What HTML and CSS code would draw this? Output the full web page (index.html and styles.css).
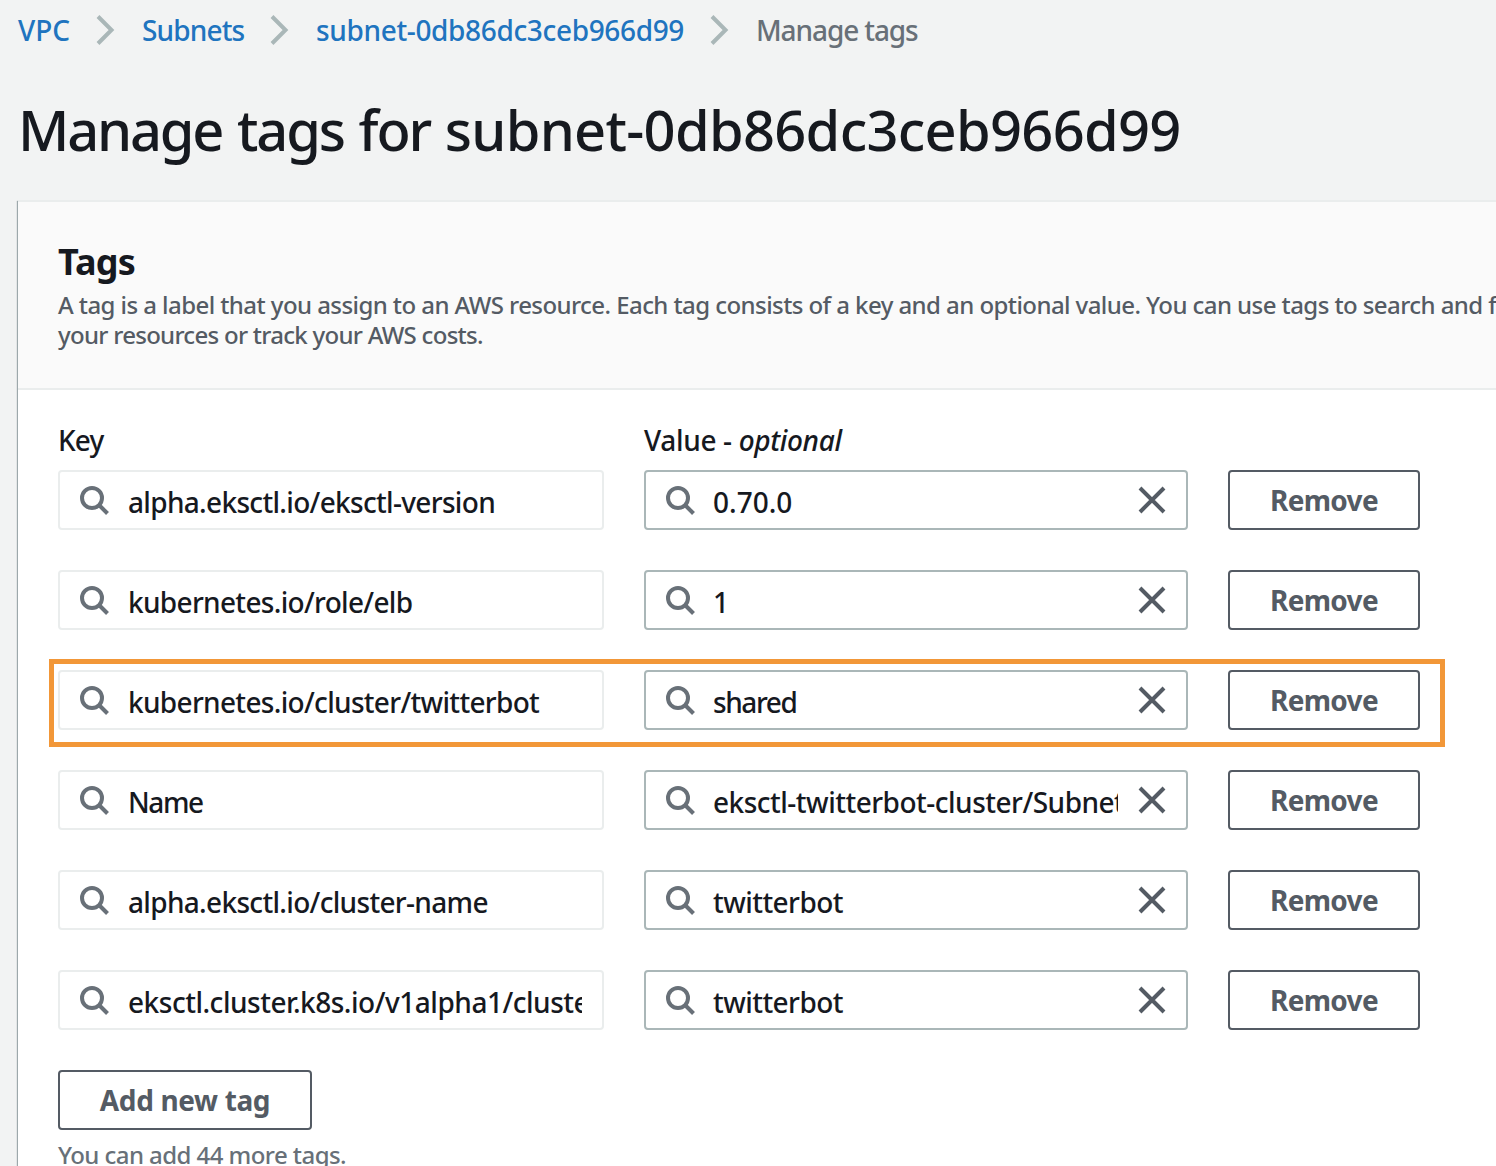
FILE: index.html
```html
<!DOCTYPE html>
<html lang="en">
<head>
<meta charset="utf-8">
<title>Manage tags</title>
<link rel="stylesheet" href="styles.css">
</head>
<body>
<svg class="sprite" aria-hidden="true">
  <symbol id="search" viewBox="0 0 32 32"><circle cx="14" cy="14" r="10" /><path d="M21 21l8.5 8.5" /></symbol>
  <symbol id="close" viewBox="0 0 32 32"><path d="M4 4l24 24M28 4L4 28" /></symbol>
  <symbol id="chevron" viewBox="0 0 20 32"><path d="M2 2.5L15.5 16 2 29.5" /></symbol>
</svg>
<nav class="breadcrumb">
  <a class="crumb vpc">VPC</a>
  <svg class="chevron"><use href="#chevron"/></svg>
  <a class="crumb subnets">Subnets</a>
  <svg class="chevron"><use href="#chevron"/></svg>
  <a class="crumb subnet-id">subnet-0db86dc3ceb966d99</a>
  <svg class="chevron"><use href="#chevron"/></svg>
  <span class="crumb current">Manage tags</span>
</nav>
<h1 class="title"><span class="title-action">Manage tags for </span>subnet-0db86dc3ceb966d99</h1>
<main class="panel">
  <header class="panel-header">
    <h2 class="panel-title">Tags</h2>
    <p class="description"><span class="line">A tag is a label that you assign to an AWS resource. Each tag consists of a key and an optional value. You can use tags to search and filter</span> <span class="line last">your resources or track your AWS costs.</span></p>
  </header>
  <section class="panel-body">
    <div class="grid labels"><span class="label key">Key</span><span class="label">Value - <em>optional</em></span></div>
    <div class="rows">
      <div class="grid row">
        <div class="field locked"><svg class="icon"><use href="#search"/></svg><span class="text">alpha.eksctl.io/eksctl-version</span></div>
        <div class="field"><svg class="icon"><use href="#search"/></svg><span class="text number">0.70.0</span><svg class="icon clear"><use href="#close"/></svg></div>
        <button class="button">Remove</button>
      </div>
      <div class="grid row">
        <div class="field locked"><svg class="icon"><use href="#search"/></svg><span class="text">kubernetes.io/role/elb</span></div>
        <div class="field"><svg class="icon"><use href="#search"/></svg><span class="text number">1</span><svg class="icon clear"><use href="#close"/></svg></div>
        <button class="button">Remove</button>
      </div>
      <div class="grid row highlighted">
        <div class="field locked"><svg class="icon"><use href="#search"/></svg><span class="text">kubernetes.io/cluster/twitterbot</span></div>
        <div class="field"><svg class="icon"><use href="#search"/></svg><span class="text tight">shared</span><svg class="icon clear"><use href="#close"/></svg></div>
        <button class="button">Remove</button>
      </div>
      <div class="grid row">
        <div class="field locked"><svg class="icon"><use href="#search"/></svg><span class="text tight">Name</span></div>
        <div class="field"><svg class="icon"><use href="#search"/></svg><span class="text path">eksctl-twitterbot-cluster/SubnetPublic</span><svg class="icon clear"><use href="#close"/></svg></div>
        <button class="button">Remove</button>
      </div>
      <div class="grid row">
        <div class="field locked"><svg class="icon"><use href="#search"/></svg><span class="text">alpha.eksctl.io/cluster-name</span></div>
        <div class="field"><svg class="icon"><use href="#search"/></svg><span class="text word">twitterbot</span><svg class="icon clear"><use href="#close"/></svg></div>
        <button class="button">Remove</button>
      </div>
      <div class="grid row">
        <div class="field locked"><svg class="icon"><use href="#search"/></svg><span class="text api">eksctl.cluster.k8s.io/v1alpha1/cluster-name</span></div>
        <div class="field"><svg class="icon"><use href="#search"/></svg><span class="text word">twitterbot</span><svg class="icon clear"><use href="#close"/></svg></div>
        <button class="button">Remove</button>
      </div>
    </div>
    <button class="button add">Add new tag</button>
    <p class="hint">You can add 44 more tags.</p>
  </section>
</main>
</body>
</html>
```
FILE: styles.css
```css
*, *::after { box-sizing: border-box; }
html, body { height: 100%; }
body {
  margin: 0;
  overflow: hidden;
  display: flex;
  flex-direction: column;
  background: #f2f3f3;
  color: #16191f;
  font: 500 28px/40px "Noto Sans", sans-serif;
}
h1, h2, p { margin: 0; }
.sprite { position: absolute; width: 0; height: 0; }
svg { fill: none; flex: none; }

.breadcrumb { flex: none; display: flex; align-items: center; height: 60px; padding-left: 18px; }
.crumb { color: #2074bf; white-space: nowrap; letter-spacing: -0.35px; }
.vpc { width: 54px; letter-spacing: 0; }
.subnets { width: 104px; letter-spacing: -0.85px; }
.subnet-id { width: 370px; }
.current { color: #687078; letter-spacing: -1.1px; }
.chevron { width: 20px; height: 32px; margin: 0 26px 0 24px; stroke: #aab7b8; stroke-width: 4; }

.title {
  flex: none;
  height: 140px;
  padding: 33px 0 0 18px;
  font-size: 56px;
  line-height: 72px;
  font-weight: 500;
  letter-spacing: -0.7px;
  white-space: nowrap;
}
.title-action { letter-spacing: -2.2px; word-spacing: 2.5px; }

.panel {
  flex: 1 0 auto;
  margin-left: 18px;
  background: #fff;
  border-top: 2px solid #eaeded;
  box-shadow: -1px 1px 1px 0 rgba(0, 28, 36, 0.35);
}
.panel-header {
  height: 188px;
  padding: 38px 0 0 40px;
  background: #fafafa;
  border-bottom: 2px solid #eaeded;
  overflow: hidden;
}
.panel-title { font-size: 36px; line-height: 44px; font-weight: 700; letter-spacing: -0.8px; }
.description { padding-top: 6px; color: #545b64; font-size: 24px; line-height: 30px; letter-spacing: -0.57px; }
.line { display: block; white-space: nowrap; }
.last { letter-spacing: -0.72px; }

.panel-body { padding: 30px 0 0 40px; }
.grid { display: grid; grid-template-columns: 546px 544px 192px; column-gap: 40px; }
.labels { height: 50px; letter-spacing: -0.35px; }
.key { letter-spacing: -0.9px; }
.rows { display: grid; row-gap: 40px; }
.row { height: 60px; position: relative; }
.highlighted::after {
  content: "";
  position: absolute;
  top: -11px;
  left: -9px;
  width: 1396px;
  height: 88px;
  border: 5px solid #f29738;
}
.field {
  display: flex;
  align-items: center;
  min-width: 0;
  padding: 0 18px;
  border: 2px solid #aab7b8;
  border-radius: 4px;
}
.field.locked { border-color: #eaeded; }
.icon { width: 32px; height: 32px; stroke: #687078; stroke-width: 4; }
.text { flex: 1; min-width: 0; overflow: hidden; white-space: nowrap; margin-left: 17px; padding-top: 3px; letter-spacing: -0.68px; }
.locked .text { margin-left: 18px; margin-right: 2px; }
.text.number { letter-spacing: 0; }
.text.word { letter-spacing: -0.55px; }
.text.tight { letter-spacing: -1.4px; }
.text.path { letter-spacing: -0.5px; }
.text.api { letter-spacing: -0.48px; }
.clear { stroke: #545b64; margin-left: 18px; }
.button {
  height: 60px;
  padding: 0 0 1px;
  border: 2px solid #545b64;
  border-radius: 4px;
  background: #fff;
  color: #545b64;
  font: 700 28px/40px "Noto Sans", sans-serif;
  letter-spacing: -0.7px;
}
.add { display: block; width: 254px; margin-top: 40px; letter-spacing: -0.35px; }
.hint { padding-top: 10px; color: #687078; font-size: 24px; line-height: 30px; letter-spacing: -0.56px; }
```
